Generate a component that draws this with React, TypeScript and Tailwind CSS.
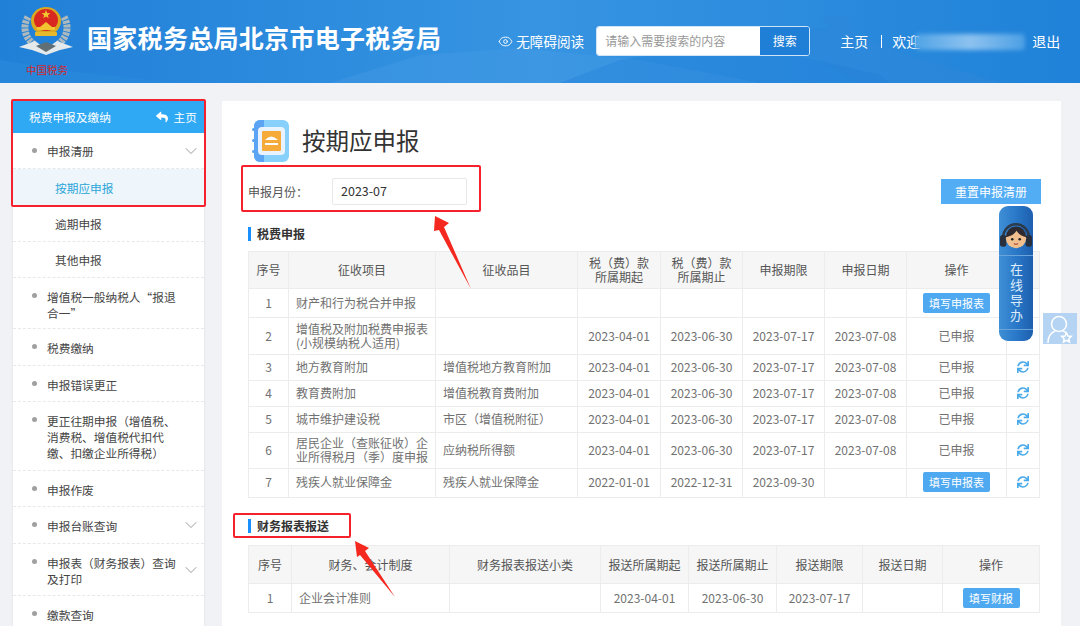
import { ChevronDown, Eye } from "lucide-react"
import { FaReply, FaSync } from "react-icons/fa"

const font = { fontFamily: '"Noto Sans CJK SC", "Liberation Sans", sans-serif' }

const menu = [
  { text: "增值税一般纳税人“报退合一”", h: "h-[51px]" },
  { text: "税费缴纳", h: "h-[37px]" },
  { text: "申报错误更正", h: "h-[36px]" },
  { text: "更正往期申报（增值税、消费税、增值税代扣代缴、扣缴企业所得税）", h: "h-[69px]" },
  { text: "申报作废", h: "h-[36px]" },
  { text: "申报台账查询", h: "h-[37px]", arrow: true },
  { text: "申报表（财务报表）查询及打印", h: "h-[52px]", arrow: true },
  { text: "缴款查询", h: "h-[37px]" },
]

const taxRows = [
  { n: 1, item: "财产和行为税合并申报", pin: "", a: "", b: "", c: "", d: "", op: "fill", h: "h-[29px]" },
  { n: 2, item: "增值税及附加税费申报表(小规模纳税人适用)", pin: "", a: "2023-04-01", b: "2023-06-30", c: "2023-07-17", d: "2023-07-08", op: "done", h: "h-[37px]" },
  { n: 3, item: "地方教育附加", pin: "增值税地方教育附加", a: "2023-04-01", b: "2023-06-30", c: "2023-07-17", d: "2023-07-08", op: "done", h: "h-[26px] [&>td]:pb-[2px]" },
  { n: 4, item: "教育费附加", pin: "增值税教育费附加", a: "2023-04-01", b: "2023-06-30", c: "2023-07-17", d: "2023-07-08", op: "done", h: "h-[26px] [&>td]:pb-[2px]" },
  { n: 5, item: "城市维护建设税", pin: "市区（增值税附征）", a: "2023-04-01", b: "2023-06-30", c: "2023-07-17", d: "2023-07-08", op: "done", h: "h-[26px] [&>td]:pb-[2px]" },
  { n: 6, item: "居民企业（查账征收）企业所得税月（季）度申报", pin: "应纳税所得额", a: "2023-04-01", b: "2023-06-30", c: "2023-07-17", d: "2023-07-08", op: "done", h: "h-[36px] [&>td]:pb-[2px]" },
  { n: 7, item: "残疾人就业保障金", pin: "残疾人就业保障金", a: "2022-01-01", b: "2022-12-31", c: "2023-09-30", d: "", op: "fill", h: "h-[29px] [&>td]:pb-[2px]" },
]

const th = "border border-[#ececec] bg-[#f6f6f6] font-normal text-[12px] leading-[14px] text-[#555] px-0"
const td = "border border-[#ececec] text-[12px] leading-[14px] text-[#717171] text-center px-1"
const tdLeft = "border border-[#ececec] text-[12px] leading-[14px] text-[#717171] text-left pl-[7px] pr-[2px]"

function SectionTitle({ text }: { text: string }) {
  return (
    <div className="flex h-[14px] items-center border-l-[3px] border-[#1890ff] pl-[6px] text-[12px] font-bold text-[#333]">
      {text}
    </div>
  )
}

function Emblem() {
  return (
    <svg width="56" height="78" viewBox="0 0 56 78" className="shrink-0">
      <path d="M9 14 C3 24 6 36 17 43 M45 14 C51 24 48 36 37 43" stroke="#aeb9bd" strokeWidth="7" fill="none" strokeDasharray="3 1" />
      <path d="M0 44 L16 38 L27 46 L38 38 L54 44 L41 47 L27 52 L13 47 Z" fill="#e4e9eb" />
      <path d="M17 43 L27 49 L37 43 L27 39 Z" fill="#5f6f75" />
      <ellipse cx="27" cy="18" rx="15" ry="14" fill="#dba91f" />
      <ellipse cx="27" cy="17" rx="12" ry="11" fill="#d8281f" />
      <path d="M27 7 l1.2 3 3.2 .2 -2.5 2 .8 3.1 -2.7-1.8 -2.7 1.8 .8-3.1 -2.5-2 3.2-.2z" fill="#f2c530" />
      <rect x="18" y="24" width="18" height="3" fill="#f2c530" />
      <rect x="16" y="29" width="22" height="4" rx="1" fill="#e8b92a" />
      <path d="M21 24 L27 19 L33 24 Z" fill="#f2c530" />
      <text x="28" y="70.500" textAnchor="middle" fontSize="10.5" fill="#d3272c" fontFamily='"Noto Sans CJK SC", sans-serif'>中国税务</text>
    </svg>
  )
}

function HeaderBg() {
  return (
    <svg className="absolute inset-0 h-full w-full" viewBox="0 0 1080 83" preserveAspectRatio="none">
      <path d="M0 60 L60 70 L180 83 H0 Z" fill="#2a8bdd" opacity="0.5" />
      <path d="M330 83 L420 55 L520 48 L640 60 L760 83 Z" fill="#4a9fe5" opacity="0.35" />
      <path d="M780 30 L830 28 L820 18 L835 15 L850 17 L855 32 L900 52 L1000 83 H860 L790 45 Z" fill="#2d86d8" opacity="0.55" />
      <path d="M620 60 L740 42 L880 75 L890 83 H560 Z" fill="#1f7fd6" opacity="0.35" />
    </svg>
  )
}

function Notebook() {
  return (
    <svg width="44" height="44" viewBox="0 0 44 44">
      <rect x="7" y="1" width="35" height="42" rx="6" fill="#86d0fb" />
      <path d="M7 7 a6 6 0 0 1 6-6 h4 v42 h-4 a6 6 0 0 1-6-6 z" fill="#5ba4f3" />
      <rect x="5" y="9" width="6" height="3" rx="1.5" fill="#5ba4f3" />
      <rect x="5" y="20" width="6" height="3" rx="1.5" fill="#5ba4f3" />
      <rect x="5" y="31" width="6" height="3" rx="1.5" fill="#5ba4f3" />
      <rect x="11" y="8" width="27" height="28" rx="4" fill="#e8f3ff" />
      <rect x="15" y="12" width="19" height="20" rx="1" fill="#f6aa3a" />
      <path d="M18 21 q6-7 13 0 z" fill="#fff" />
      <rect x="18" y="24" width="13" height="2" fill="#fff" />
    </svg>
  )
}

function FillButton({ text, w }: { text: string; w: string }) {
  return (
    <span className={"mx-auto flex h-[20px] items-center justify-center rounded-[2px] bg-[#4fa9f1] text-[11px] text-white " + w}>
      {text}
    </span>
  )
}

function Guide() {
  return (
    <div className="absolute left-[999px] top-[206px] flex h-[135px] w-[34px] flex-col items-center rounded-[9px] bg-gradient-to-r from-[#3f8fd6] via-[#2a78c8] to-[#1d5fae] text-white">
      <svg width="32" height="32" viewBox="0 0 30 30" className="mt-[13px]">
        <path d="M3 17 a12 12 0 0 1 24 0" stroke="#2d3a4a" strokeWidth="2.4" fill="none" />
        <rect x="0" y="15" width="6" height="11" rx="2.5" fill="#27303c" />
        <rect x="24" y="15" width="6" height="11" rx="2.5" fill="#27303c" />
        <circle cx="15" cy="18" r="9.5" fill="#f2c08e" />
        <path d="M5.5 17 q1-10 9.5-10 q8.5 0 9.5 10 q-6-1-9-6 q-3 5-10 6z" fill="#2f2a30" />
        <circle cx="11.5" cy="19" r="1.2" fill="#222" />
        <circle cx="18.5" cy="19" r="1.2" fill="#222" />
        <path d="M13 23 q2 1.5 4 0" stroke="#b5533c" strokeWidth="1" fill="none" />
      </svg>
      <div className="mt-[4px] w-full border-t border-[#6ba3db]" />
      <div className="mt-[7px] h-[62px] whitespace-nowrap text-[13px] leading-[34px] tracking-[2.3px] text-[#dcecfa] [writing-mode:vertical-rl]">
        在线导办
      </div>
      <div className="mt-[4px] w-full border-t border-[#6ba3db]" />
    </div>
  )
}

function Annotations() {
  return (
    <>
      <div className="absolute left-[11px] top-[99px] h-[108px] w-[195px] rounded-[2px] border-[2px] border-[#f5222d]" />
      <div className="absolute left-[241px] top-[165px] h-[47px] w-[240px] rounded-[2px] border-[2px] border-[#f5222d]" />
      <div className="absolute left-[233px] top-[513px] h-[25px] w-[118px] rounded-[2px] border-[2px] border-[#f5222d]" />
      <svg className="absolute left-[425px] top-[210px]" width="55" height="85" viewBox="0 0 55 85">
        <path d="M10 6 L24 13 L19 17 L46 79 L14 20 L9 21 Z" fill="#f5281f" />
      </svg>
      <svg className="absolute left-[350px] top-[538px]" width="50" height="65" viewBox="0 0 50 65">
        <path d="M5 3 L19 10 L15 13 L45 59 L10 17 L7 19 Z" fill="#f5281f" />
      </svg>
      <div className="absolute left-[1043px] top-[313px] h-[31px] w-[34px] bg-[#b5d3f2]">
        <svg width="34" height="31" viewBox="0 0 34 31" fill="none" stroke="#fff" strokeWidth="1.5">
          <circle cx="16" cy="11" r="7.5" />
          <path d="M5 30 q0-9 7-12 M20 18 q3 1 4 3" />
          <path d="M23.5 20 l1.5 3 3.3 .4 -2.4 2.3 .6 3.3 -3-1.6 -3 1.6 .6-3.3 -2.4-2.3 3.3-.4z" fill="#b5d3f2" />
        </svg>
      </div>
    </>
  )
}

export default function App() {
  return (
    <div className="relative h-[626px] w-[1080px] overflow-hidden bg-[#f0f2f5]" style={font}>
      {/* top bar */}
      <header className="relative flex h-[83px] items-center bg-gradient-to-r from-[#2080d7] via-[#3694e2] to-[#1f82d8] pl-[19px] text-white">
        <HeaderBg />
        <div className="relative flex w-full items-center">
          <Emblem />
          <h1 className="mb-[7px] ml-[12px] text-[25px] font-bold tracking-[0.3px] whitespace-nowrap">国家税务总局北京市电子税务局</h1>
          <div className="ml-[57px] flex items-center gap-[3px] text-[13.6px] whitespace-nowrap">
            <Eye size={15} strokeWidth={1.5} />
            无障碍阅读
          </div>
          <div className="mb-[2px] ml-[12px] flex h-[30px] w-[214px] overflow-hidden rounded-[3px] border border-[#cfe4f7]">
            <div className="flex flex-1 items-center bg-white pl-[8px] text-[12px] whitespace-nowrap text-[#999]">请输入需要搜索的内容</div>
            <div className="flex w-[49px] items-center justify-center bg-[#1f7ed6] text-[12px]">搜索</div>
          </div>
          <div className="ml-[30px] text-[14px] whitespace-nowrap">主页</div>
          <div className="ml-[13px] h-[13px] border-l border-white" />
          <div className="ml-[10px] text-[14px] whitespace-nowrap">欢迎</div>
          <div className="relative -ml-[5px] h-[16px] w-[110px] rounded-sm bg-gradient-to-r from-[#4fa3e6] via-[#8cc2ef] to-[#4b9fe5] blur-[2px]" />
          <div className="ml-[7px] text-[14px] whitespace-nowrap">退出</div>
        </div>
      </header>

      <div className="flex items-start pt-[18px] pl-[13px]">
        {/* side menu */}
        <aside className="w-[191px] shrink-0 bg-white text-[11.7px] text-[#444] shadow-[0_0_2px_#d8dce2]">
          <div className="flex h-[32px] items-center justify-between bg-[#30a9f5] pr-[7px] pl-[16px] text-white">
            <span>税费申报及缴纳</span>
            <span className="flex items-center gap-[6px]">
              <FaReply size={12} />
              主页
            </span>
          </div>
          <div className="flex h-[36px] items-center border-b border-dashed border-[#e8e8e8] pl-[19px]">
            <span className="mr-[10px] h-[5px] w-[5px] rounded-full bg-[#a0a0a0]" />
            <span className="flex-1 pt-[1px]">申报清册</span>
            <ChevronDown size={20} strokeWidth={1} className="mr-[3px] text-[#888]" />
          </div>
          <div className="flex h-[37px] items-center bg-[#eef6fc] pl-[42px] text-[#2aa5d8]">按期应申报</div>
          <div className="flex h-[36px] items-center border-b border-dashed border-[#e8e8e8] pl-[42px]">逾期申报</div>
          <div className="flex h-[36px] items-center border-b border-dashed border-[#e8e8e8] pl-[42px]">其他申报</div>
          {menu.map((m) => (
            <div key={m.text} className={"flex items-start border-b border-dashed border-[#e8e8e8] pt-[11px] pl-[19px] " + m.h}>
              <span className="mt-[4px] mr-[10px] h-[5px] w-[5px] shrink-0 rounded-full bg-[#a0a0a0]" />
              <span className="w-[132px] leading-[16px]">{m.text}</span>
              {m.arrow && <ChevronDown size={20} strokeWidth={1} className="mb-[11px] ml-[2px] self-center text-[#888]" />}
            </div>
          ))}
        </aside>

        {/* main panel */}
        <main className="ml-[18px] h-[526px] w-[839px] shrink-0 bg-white pt-[18px] pl-[26px]">
          <div className="-ml-[1px] flex items-center">
            <Notebook />
            <span className="ml-[11px] text-[23.5px] text-[#333]">按期应申报</span>
          </div>
          <div className="mt-[15px] flex items-center">
            <span className="text-[12px] text-[#555]">申报月份：</span>
            <div className="ml-[24px] flex h-[27px] w-[135px] items-center rounded-[2px] border border-[#e8e8e8] pl-[8px] text-[12.5px] text-[#333]">2023-07</div>
            <div className="ml-[474px] flex h-[25px] w-[100px] items-center justify-center bg-[#52adf5] text-[12px] text-white">重置申报清册</div>
          </div>
          <div className="mt-[22px]"><SectionTitle text="税费申报" /></div>
          <table className="mt-[10px] w-[791px] table-fixed border-collapse">
            <colgroup>
              <col className="w-[40px]" /><col className="w-[147px]" /><col className="w-[142px]" /><col className="w-[83px]" />
              <col className="w-[82px]" /><col className="w-[82px]" /><col className="w-[82px]" /><col className="w-[100px]" /><col className="w-[33px]" />
            </colgroup>
            <thead>
              <tr className="h-[37px]">
                <th className={th}>序号</th>
                <th className={th}>征收项目</th>
                <th className={th}>征收品目</th>
                <th className={th}><span className="mx-auto block w-[61px]">税（费）款所属期起</span></th>
                <th className={th}><span className="mx-auto block w-[61px]">税（费）款所属期止</span></th>
                <th className={th}>申报期限</th>
                <th className={th}>申报日期</th>
                <th className={th}>操作</th>
                <th className={th}></th>
              </tr>
            </thead>
            <tbody>
              {taxRows.map((r) => (
                <tr key={r.n} className={r.h}>
                  <td className={td}>{r.n}</td>
                  <td className={tdLeft}>{r.item}</td>
                  <td className={tdLeft}>{r.pin}</td>
                  <td className={td}>{r.a}</td>
                  <td className={td}>{r.b}</td>
                  <td className={td}>{r.c}</td>
                  <td className={td}>{r.d}</td>
                  <td className={td}>{r.op === "fill" ? <FillButton text="填写申报表" w="w-[67px]" /> : "已申报"}</td>
                  <td className={td}>{r.n > 2 && <FaSync size={12} className="mx-auto text-[#4aaaea]" />}</td>
                </tr>
              ))}
            </tbody>
          </table>
          <div className="mt-[21px]"><SectionTitle text="财务报表报送" /></div>
          <table className="mt-[12px] w-[791px] table-fixed border-collapse">
            <colgroup>
              <col className="w-[43px]" /><col className="w-[158px]" /><col className="w-[151px]" /><col className="w-[88px]" />
              <col className="w-[88px]" /><col className="w-[86px]" /><col className="w-[80px]" /><col className="w-[97px]" />
            </colgroup>
            <thead>
              <tr className="h-[38px]">
                <th className={th}>序号</th>
                <th className={th}>财务、会计制度</th>
                <th className={th}>财务报表报送小类</th>
                <th className={th}>报送所属期起</th>
                <th className={th}>报送所属期止</th>
                <th className={th}>报送期限</th>
                <th className={th}>报送日期</th>
                <th className={th}>操作</th>
              </tr>
            </thead>
            <tbody>
              <tr className="h-[29px]">
                <td className={td}>1</td>
                <td className={tdLeft}>企业会计准则</td>
                <td className={td}></td>
                <td className={td}>2023-04-01</td>
                <td className={td}>2023-06-30</td>
                <td className={td}>2023-07-17</td>
                <td className={td}></td>
                <td className={td}><FillButton text="填写财报" w="w-[57px]" /></td>
              </tr>
            </tbody>
          </table>
        </main>
      </div>

      <Guide />
      <Annotations />
    </div>
  )
}
